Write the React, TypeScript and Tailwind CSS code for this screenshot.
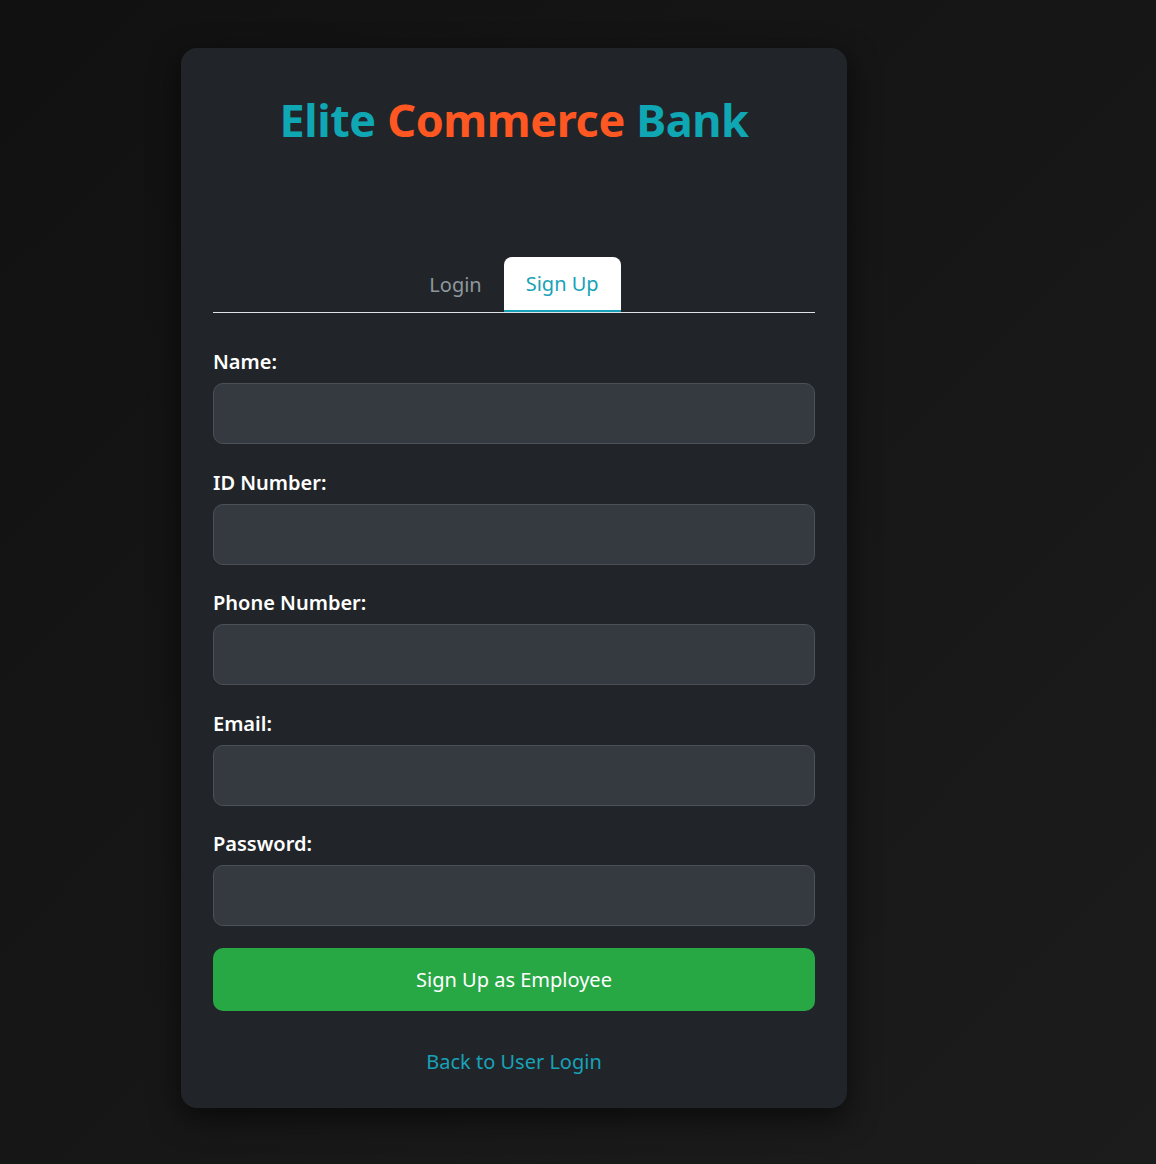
import { useState } from "react";

const fields = [
  { id: "name", label: "Name:", type: "text" },
  { id: "idNumber", label: "ID Number:", type: "text" },
  { id: "phone", label: "Phone Number:", type: "tel" },
  { id: "email", label: "Email:", type: "email" },
  { id: "password", label: "Password:", type: "password" },
];

export default function App() {
  const [tab, setTab] = useState<"login" | "signup">("signup");

  return (
    <div
      className="min-h-[1164px] w-full bg-gradient-to-br from-[#111111] to-[#1c1c1c] pt-12 pl-[181px]"
      style={{ fontFamily: '"Noto Sans", "Open Sans", sans-serif' }}
    >
      <div className="w-[666px] rounded-2xl bg-[#212529] px-8 pt-8 pb-[31px] shadow-[0_10px_30px_rgba(0,0,0,0.6)]">
        <h1 className="mt-[12px] text-center text-[45px] font-bold leading-[56px] tracking-[-0.4px]">
          <span className="text-[#0fa7b3]">Elite </span>
          <span className="text-[#ff5722]">Commerce </span>
          <span className="text-[#0fa7b3]">Bank</span>
        </h1>

        <div className="mt-[109px] flex justify-center border-b border-[#dee2e6]">
          <button
            onClick={() => setTab("login")}
            className={
              tab === "login"
                ? "h-[55px] rounded-t-lg border-b-2 border-[#17a2b8] bg-white px-[22px] text-[20px] text-[#17a2b8]"
                : "h-[55px] px-[22px] text-[20px] text-[#8f979e]"
            }
          >
            Login
          </button>
          <button
            onClick={() => setTab("signup")}
            className={
              tab === "signup"
                ? "h-[55px] rounded-t-lg border-b-2 border-[#17a2b8] bg-white px-[22px] text-[20px] text-[#17a2b8]"
                : "h-[55px] px-[22px] text-[20px] text-[#8f979e]"
            }
          >
            Sign Up
          </button>
        </div>

        <form className="mt-[38px] flex flex-col gap-[27.5px]" onSubmit={(e) => e.preventDefault()}>
          {fields.map((f) => (
            <div key={f.id} className="flex flex-col gap-[10px]">
              <label htmlFor={f.id} className="text-[20px] font-semibold leading-[22px] text-white">
                {f.label}
              </label>
              <input
                id={f.id}
                type={f.type}
                className="h-[61px] w-full rounded-[10px] border border-[#4b5158] bg-[#343a40] px-4 text-[18px] text-white outline-none"
              />
            </div>
          ))}
          <button
            type="submit"
            className="-mt-[5.5px] h-[63px] w-full rounded-[10px] bg-[#28a745] text-[20px] text-white"
          >
            Sign Up as Employee
          </button>
        </form>

        <div className="mt-[36px] text-center">
          <a href="#" className="text-[20px] text-[#17a2b8]">
            Back to User Login
          </a>
        </div>
      </div>
    </div>
  );
}
